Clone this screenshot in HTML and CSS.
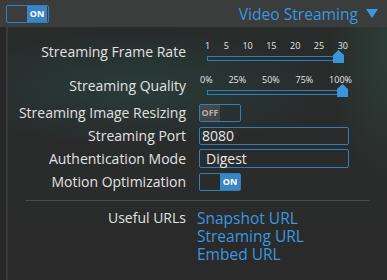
FILE: index.html
```html
<html>

<head>
    <title>Video Streaming</title>
    <link rel="stylesheet" href="styles.css">
</head>

<body>
    <div class="header">
        <div class="toggle on">
            <span class="toggle_off"></span>
            <span class="toggle_on">ON</span>
        </div>
        <div class="section_title">Video Streaming <span class="arrow"></span></div>
    </div>

    <div class="main">
        <div class="side"></div>
        <div class="settings">
            <div class="row slider_row">
                <div class="label">Streaming Frame Rate</div>
                <div class="slider">
                    <div class="ticks frame_ticks">
                        <span>1</span><span>5</span><span>10</span><span>15</span><span>20</span><span>25</span><span>30</span>
                    </div>
                    <div class="track">
                        <span class="thumb thumb_rate"></span>
                    </div>
                </div>
            </div>

            <div class="row slider_row quality_row">
                <div class="label">Streaming Quality</div>
                <div class="slider">
                    <div class="ticks quality_ticks">
                        <span>0%</span><span>25%</span><span>50%</span><span>75%</span><span>100%</span>
                    </div>
                    <div class="track">
                        <span class="thumb thumb_quality"></span>
                    </div>
                </div>
            </div>

            <div class="row">
                <div class="label">Streaming Image Resizing</div>
                <div class="toggle off">
                    <span class="toggle_off">OFF</span>
                    <span class="toggle_on"></span>
                </div>
            </div>

            <div class="row">
                <div class="label">Streaming Port</div>
                <input class="text_input" type="text" value="8080">
            </div>

            <div class="row">
                <div class="label">Authentication Mode</div>
                <div class="select">Digest</div>
            </div>

            <div class="row">
                <div class="label">Motion Optimization</div>
                <div class="toggle on">
                    <span class="toggle_off"></span>
                    <span class="toggle_on">ON</span>
                </div>
            </div>

            <div class="separator"></div>

            <div class="row urls_row">
                <div class="label">Useful URLs</div>
                <div class="links">
                    <a href="#">Snapshot URL</a>
                    <a href="#">Streaming URL</a>
                    <a href="#">Embed URL</a>
                </div>
            </div>
        </div>
    </div>
</body>

</html>
```

FILE: styles.css
```css
body {
    margin: 0;
    width: 387px;
    height: 280px;
    overflow: hidden;
    font-family: 'Open Sans', 'DejaVu Sans', sans-serif;
    font-size: 14px;
    color: #e2e2e2;
    background-color: #2a2a2a;
}

.header {
    height: 27px;
    display: flex;
    align-items: center;
    justify-content: space-between;
    padding: 0 9px 0 6px;
    background-color: #3a3d3b;
}

.section_title {
    color: #3a97e0;
    font-size: 15.6px;
    display: flex;
    align-items: center;
}

.arrow {
    display: inline-block;
    margin-left: 8px;
    width: 0;
    height: 0;
    border-left: 6px solid transparent;
    border-right: 6px solid transparent;
    border-top: 9px solid #3a97e0;
}

.main {
    display: flex;
    height: 253px;
}

.side {
    width: 6px;
    background-color: #272727;
    border-right: 2px solid #3b3b3b;
}

.settings {
    flex: 1;
    padding-top: 8px;
    background:
        radial-gradient(ellipse 200px 60px at 130px 60px, rgba(40, 80, 75, 0.45), transparent),
        radial-gradient(ellipse 60px 140px at 380px 20px, rgba(50, 80, 70, 0.5), transparent),
        linear-gradient(#272b2a, #2a2b2b 60%, #2a2a2a);
}

.row {
    display: grid;
    grid-template-columns: 178px 1fr;
    column-gap: 13px;
    align-items: center;
    height: 23px;
}

.label {
    text-align: right;
    white-space: nowrap;
}

.slider_row {
    height: 32px;
    align-items: end;
}

.quality_row {
    margin-top: 2px;
}

.slider_row .label {
    padding-bottom: 6px;
}

.slider {
    width: 152px;
    margin-left: 1px;
}

.ticks {
    display: flex;
    justify-content: space-between;
    font-size: 9px;
    line-height: 10px;
    color: #e6e6e6;
    margin-bottom: 4px;
}

.frame_ticks {
    padding: 0 4px 0 5px;
}

.track {
    position: relative;
    height: 3px;
    margin: 5px 8px 6px 7px;
    border: 1px solid #2f7fc0;
}

.thumb {
    position: absolute;
    top: -7px;
    width: 11px;
    height: 13px;
    background-color: #3a95dd;
    clip-path: polygon(50% 0, 100% 38%, 100% 100%, 0 100%, 0 38%);
}

.thumb_rate {
    left: 125px;
}

.thumb_quality {
    left: 129px;
}

.toggle {
    display: flex;
    width: 40px;
    height: 16px;
    border: 1px solid #2f7fc0;
    border-radius: 2px;
    font-size: 9px;
    font-weight: bold;
    line-height: 16px;
}

.toggle span {
    width: 20px;
    text-align: center;
}

.toggle.on .toggle_on {
    background-color: #3a86c4;
    color: #ffffff;
}

.toggle.off .toggle_off {
    background-color: #464646;
    color: #b0b0b0;
}

.header .toggle {
    width: 41px;
}

.text_input,
.select {
    box-sizing: border-box;
    width: 150px;
    border: 1px solid #2f7fc0;
    border-radius: 2px;
    background-color: transparent;
    color: #e8e8e8;
    font-family: 'Open Sans', 'DejaVu Sans', sans-serif;
    font-size: 14px;
}

.text_input {
    height: 18px;
    padding: 0 2px;
}

.select {
    height: 19px;
    line-height: 17px;
    padding: 0 6px;
}

.separator {
    margin: 7px 17px 8px 17px;
    border-top: 1px solid #4a4a4a;
}

.urls_row {
    height: auto;
    align-items: start;
}

.links {
    display: flex;
    flex-direction: column;
    margin-left: -2px;
    line-height: 18px;
}

.urls_row .label {
    line-height: 18px;
}

.links a {
    color: #3a97e0;
    text-decoration: none;
    font-size: 15.5px;
}
```
